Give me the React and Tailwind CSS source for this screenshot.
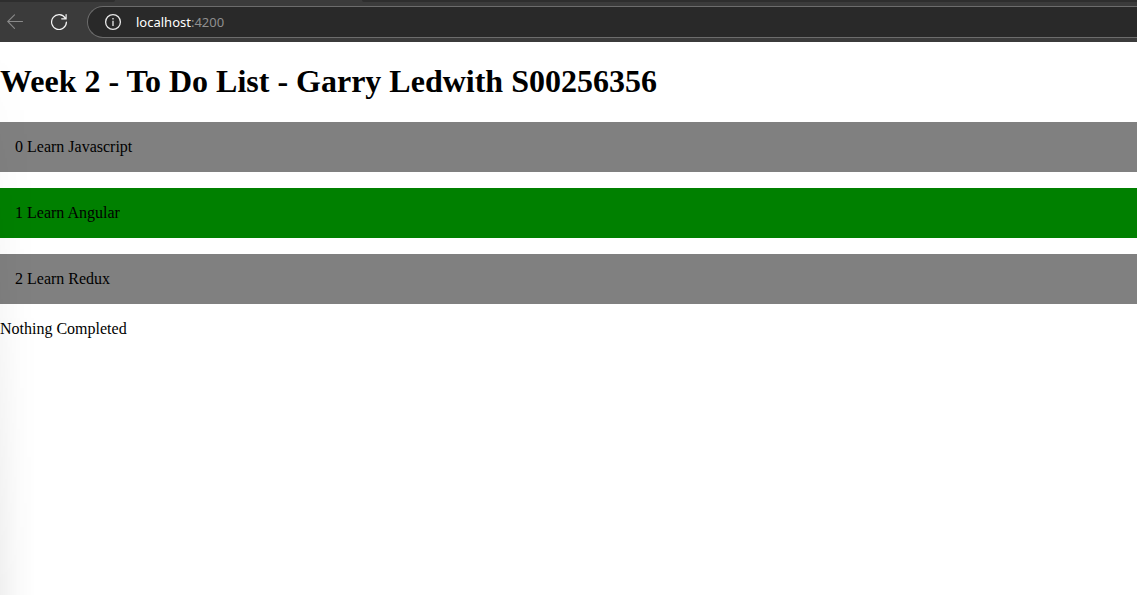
const items = [
  { id: 0, title: "Learn Javascript", selected: false },
  { id: 1, title: "Learn Angular", selected: true },
  { id: 2, title: "Learn Redux", selected: false },
];

function BrowserBar() {
  return (
    <header className="bg-[#3b3b3b]">
      <div className="flex h-0.5">
        <div className="w-[115px] rounded-br-sm bg-[#2e2e2e]" />
        <div className="w-[247px]" />
        <div className="grow rounded-bl-sm bg-[#2e2e2e]" />
      </div>
      <div className="flex items-center pt-1 pb-1">
        <button type="button" aria-label="Back" className="ml-[7px] text-[#8a8a8a]">
          <svg width="16" height="16" viewBox="0 0 16 16" fill="none" stroke="currentColor" strokeWidth="1.1" strokeLinecap="round">
            <path d="M15.5 7.5H.7M7.5 .8.7 7.5l6.8 6.8" />
          </svg>
        </button>
        <button type="button" aria-label="Reload" className="ml-7 text-[#f4f4f4]">
          <svg width="16" height="16" viewBox="0 0 16 16" fill="none" stroke="currentColor" strokeWidth="1.2" strokeLinecap="round">
            <path d="M15.4 8A7.4 7.4 0 1 1 14.3 4.2M15.1 .6v4.2h-4.4" />
          </svg>
        </button>
        <div className="ml-5 flex h-8 grow items-center rounded-l-full border border-r-0 border-[#6c6c6c] bg-[#292929] pl-4">
          <svg width="18" height="18" viewBox="0 0 18 18" fill="none">
            <circle cx="9" cy="9" r="7.4" stroke="#e8e8e8" strokeWidth="1.3" />
            <path d="M9 7.8v5.2M9 5v1.6" stroke="#b4b4b4" strokeWidth="1.8" />
          </svg>
          <a href="http://localhost:4200" className="ml-3.5 font-['Noto_Sans','Open_Sans',sans-serif] text-[13px] leading-5 text-white">
            localhost<span className="text-[#8f8f8f]">:4200</span>
          </a>
        </div>
      </div>
    </header>
  );
}

export default function App() {
  return (
    <div className="flex min-h-screen flex-col bg-white font-['Liberation_Serif',serif] text-base leading-5 text-black">
      <BrowserBar />
      <main className="relative grow">
        <h1 className="pt-5 pb-[22px] text-[32px] leading-[38px] font-bold">
          Week 2 - To Do List - Garry Ledwith S00256356
        </h1>
        <ul className="flex flex-col gap-4">
          {items.map((item) => (
            <li key={item.id} className={item.selected ? "bg-[#008000] p-[15px]" : "bg-[#808080] p-[15px]"}>
              {item.id} {item.title}
            </li>
          ))}
        </ul>
        <p className="py-4 leading-[18px]">Nothing Completed</p>
        <div className="pointer-events-none absolute inset-y-0 left-0 w-9 bg-linear-to-r from-black/6 via-black/2 to-transparent mask-t-from-0%" />
      </main>
    </div>
  );
}
